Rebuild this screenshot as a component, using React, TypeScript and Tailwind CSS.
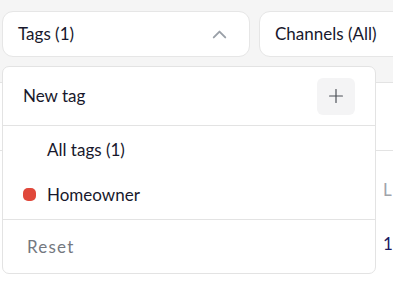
import { ChevronUp, Plus } from "lucide-react";

const tags = [{ name: "Homeowner", color: "bg-[#e0483b]" }];

export default function App() {
  return (
    <div
      className="relative h-[288px] w-full overflow-hidden bg-[#f5f5f5] text-[#18182c]"
      style={{ fontFamily: "Lato, 'Open Sans', sans-serif" }}
    >
      {/* filter buttons */}
      <div className="flex gap-[9px] pl-[2px] pt-[11px]">
        <button className="flex h-[46px] w-[248px] shrink-0 items-center justify-between rounded-[11px] border border-[#e6e6e6] bg-white pl-[15px] pr-[18px] text-[17px]">
          <span>Tags (1)</span>
          <ChevronUp size={23} strokeWidth={2} className="text-[#9aa0a8]" />
        </button>
        <button className="flex h-[46px] w-[160px] shrink-0 items-center rounded-[11px] border border-[#e6e6e6] bg-white pl-[15px] text-[17px]">
          Channels (All)
        </button>
      </div>

      {/* table behind the menu */}
      <div className="mt-[25px] h-[300px] border-t border-[#e3e3e3] bg-white">
        <div className="h-[68px] border-b border-[#e3e3e3]" />
        <div className="pl-[383px] pt-[26px] text-[17px] text-[#a0a4aa]">L</div>
        <div className="pl-[383px] pt-[28px] text-[17px] text-[#1b1b5f]">1</div>
      </div>

      {/* tags dropdown */}
      <div className="absolute left-[2px] top-[66px] w-[374px] rounded-[7px] border border-[#e3e3e3] bg-white">
        <div className="flex h-[59px] items-center justify-between border-b border-[#e3e3e3] pl-[20px] pr-[20px]">
          <span className="text-[17px]">New tag</span>
          <button className="flex h-[37px] w-[38px] items-center justify-center rounded-[6px] bg-[#f4f4f5] text-[#4b4f56]">
            <Plus size={22} strokeWidth={1.3} />
          </button>
        </div>
        <div className="border-b border-[#e3e3e3] pb-[2px] pt-[1px]">
          <div className="flex h-[45px] items-center pl-[44px] text-[17px]">All tags (1)</div>
          {tags.map((t) => (
            <div key={t.name} className="flex h-[45px] items-center gap-[11px] pl-[20px] text-[17px]">
              <span className={`h-[13px] w-[13px] rounded-[5px] ${t.color}`} />
              {t.name}
            </div>
          ))}
        </div>
        <div className="flex h-[53px] items-center pl-[24px] text-[17px] tracking-[1.2px] text-[#74787f]">
          Reset
        </div>
      </div>
    </div>
  );
}
